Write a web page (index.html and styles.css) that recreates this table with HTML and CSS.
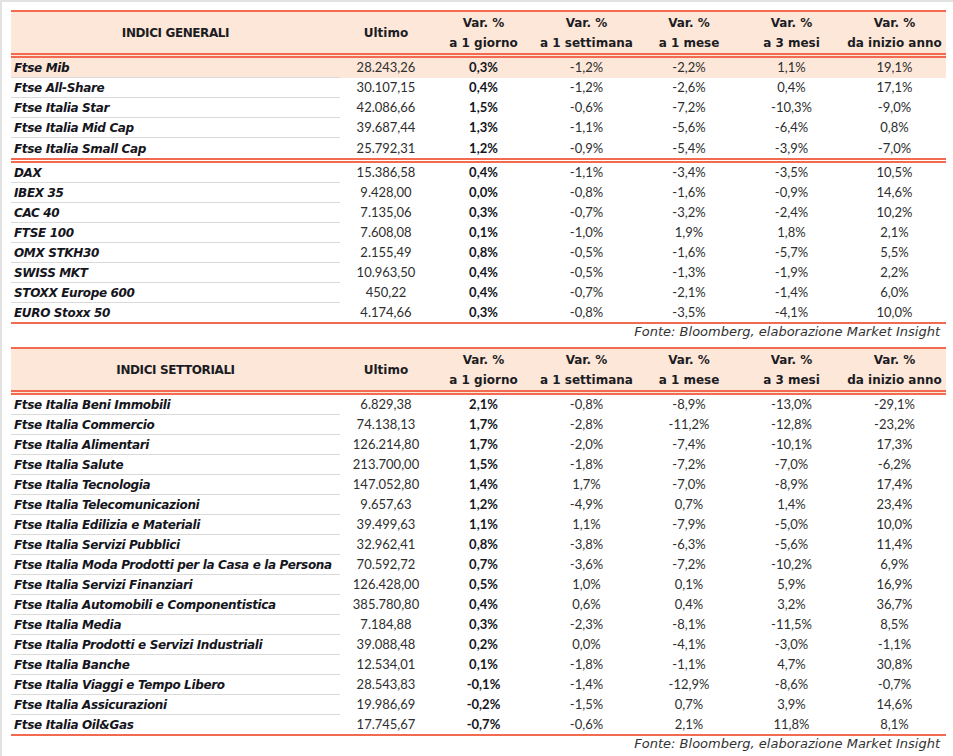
FILE: index.html
```html
<!DOCTYPE html>
<html lang="it">
<head>
<meta charset="utf-8">
<title>Indici</title>
<link rel="stylesheet" href="styles.css">
</head>
<body>
<div class="page">
  <table class="grid">
    <colgroup>
      <col class="c-name"><col class="c-last"><col class="c-v"><col class="c-v"><col class="c-v2"><col class="c-v"><col class="c-v">
    </colgroup>
    <thead>
      <tr>
        <th class="h-name">INDICI GENERALI</th>
        <th>Ultimo</th>
        <th>Var. %<br>a 1 giorno</th>
        <th>Var. %<br>a 1 settimana</th>
        <th>Var. %<br>a 1 mese</th>
        <th>Var. %<br>a 3 mesi</th>
        <th>Var. %<br>da inizio anno</th>
      </tr>
    </thead>
    <tbody>
      <tr class="hl"><td>Ftse Mib</td><td>28.243,26</td><td>0,3%</td><td>-1,2%</td><td>-2,2%</td><td>1,1%</td><td>19,1%</td></tr>
      <tr><td>Ftse All-Share</td><td>30.107,15</td><td>0,4%</td><td>-1,2%</td><td>-2,6%</td><td>0,4%</td><td>17,1%</td></tr>
      <tr><td>Ftse Italia Star</td><td>42.086,66</td><td>1,5%</td><td>-0,6%</td><td>-7,2%</td><td>-10,3%</td><td>-9,0%</td></tr>
      <tr><td>Ftse Italia Mid Cap</td><td>39.687,44</td><td>1,3%</td><td>-1,1%</td><td>-5,6%</td><td>-6,4%</td><td>0,8%</td></tr>
      <tr class="sep"><td>Ftse Italia Small Cap</td><td>25.792,31</td><td>1,2%</td><td>-0,9%</td><td>-5,4%</td><td>-3,9%</td><td>-7,0%</td></tr>
      <tr><td>DAX</td><td>15.386,58</td><td>0,4%</td><td>-1,1%</td><td>-3,4%</td><td>-3,5%</td><td>10,5%</td></tr>
      <tr><td>IBEX 35</td><td>9.428,00</td><td>0,0%</td><td>-0,8%</td><td>-1,6%</td><td>-0,9%</td><td>14,6%</td></tr>
      <tr><td>CAC 40</td><td>7.135,06</td><td>0,3%</td><td>-0,7%</td><td>-3,2%</td><td>-2,4%</td><td>10,2%</td></tr>
      <tr><td>FTSE 100</td><td>7.608,08</td><td>0,1%</td><td>-1,0%</td><td>1,9%</td><td>1,8%</td><td>2,1%</td></tr>
      <tr><td>OMX STKH30</td><td>2.155,49</td><td>0,8%</td><td>-0,5%</td><td>-1,6%</td><td>-5,7%</td><td>5,5%</td></tr>
      <tr><td>SWISS MKT</td><td>10.963,50</td><td>0,4%</td><td>-0,5%</td><td>-1,3%</td><td>-1,9%</td><td>2,2%</td></tr>
      <tr><td>STOXX Europe 600</td><td>450,22</td><td>0,4%</td><td>-0,7%</td><td>-2,1%</td><td>-1,4%</td><td>6,0%</td></tr>
      <tr class="last"><td>EURO Stoxx 50</td><td>4.174,66</td><td>0,3%</td><td>-0,8%</td><td>-3,5%</td><td>-4,1%</td><td>10,0%</td></tr>
    </tbody>
  </table>
  <p class="source">Fonte: Bloomberg, elaborazione Market Insight</p>

  <table class="grid second">
    <colgroup>
      <col class="c-name"><col class="c-last"><col class="c-v"><col class="c-v"><col class="c-v2"><col class="c-v"><col class="c-v">
    </colgroup>
    <thead>
      <tr>
        <th class="h-name">INDICI SETTORIALI</th>
        <th>Ultimo</th>
        <th>Var. %<br>a 1 giorno</th>
        <th>Var. %<br>a 1 settimana</th>
        <th>Var. %<br>a 1 mese</th>
        <th>Var. %<br>a 3 mesi</th>
        <th>Var. %<br>da inizio anno</th>
      </tr>
    </thead>
    <tbody>
      <tr><td>Ftse Italia Beni Immobili</td><td>6.829,38</td><td>2,1%</td><td>-0,8%</td><td>-8,9%</td><td>-13,0%</td><td>-29,1%</td></tr>
      <tr><td>Ftse Italia Commercio</td><td>74.138,13</td><td>1,7%</td><td>-2,8%</td><td>-11,2%</td><td>-12,8%</td><td>-23,2%</td></tr>
      <tr><td>Ftse Italia Alimentari</td><td>126.214,80</td><td>1,7%</td><td>-2,0%</td><td>-7,4%</td><td>-10,1%</td><td>17,3%</td></tr>
      <tr><td>Ftse Italia Salute</td><td>213.700,00</td><td>1,5%</td><td>-1,8%</td><td>-7,2%</td><td>-7,0%</td><td>-6,2%</td></tr>
      <tr><td>Ftse Italia Tecnologia</td><td>147.052,80</td><td>1,4%</td><td>1,7%</td><td>-7,0%</td><td>-8,9%</td><td>17,4%</td></tr>
      <tr><td>Ftse Italia Telecomunicazioni</td><td>9.657,63</td><td>1,2%</td><td>-4,9%</td><td>0,7%</td><td>1,4%</td><td>23,4%</td></tr>
      <tr><td>Ftse Italia Edilizia e Materiali</td><td>39.499,63</td><td>1,1%</td><td>1,1%</td><td>-7,9%</td><td>-5,0%</td><td>10,0%</td></tr>
      <tr><td>Ftse Italia Servizi Pubblici</td><td>32.962,41</td><td>0,8%</td><td>-3,8%</td><td>-6,3%</td><td>-5,6%</td><td>11,4%</td></tr>
      <tr><td>Ftse Italia Moda Prodotti per la Casa e la Persona</td><td>70.592,72</td><td>0,7%</td><td>-3,6%</td><td>-7,2%</td><td>-10,2%</td><td>6,9%</td></tr>
      <tr><td>Ftse Italia Servizi Finanziari</td><td>126.428,00</td><td>0,5%</td><td>1,0%</td><td>0,1%</td><td>5,9%</td><td>16,9%</td></tr>
      <tr><td>Ftse Italia Automobili e Componentistica</td><td>385.780,80</td><td>0,4%</td><td>0,6%</td><td>0,4%</td><td>3,2%</td><td>36,7%</td></tr>
      <tr><td>Ftse Italia Media</td><td>7.184,88</td><td>0,3%</td><td>-2,3%</td><td>-8,1%</td><td>-11,5%</td><td>8,5%</td></tr>
      <tr><td>Ftse Italia Prodotti e Servizi Industriali</td><td>39.088,48</td><td>0,2%</td><td>0,0%</td><td>-4,1%</td><td>-3,0%</td><td>-1,1%</td></tr>
      <tr><td>Ftse Italia Banche</td><td>12.534,01</td><td>0,1%</td><td>-1,8%</td><td>-1,1%</td><td>4,7%</td><td>30,8%</td></tr>
      <tr><td>Ftse Italia Viaggi e Tempo Libero</td><td>28.543,83</td><td>-0,1%</td><td>-1,4%</td><td>-12,9%</td><td>-8,6%</td><td>-0,7%</td></tr>
      <tr><td>Ftse Italia Assicurazioni</td><td>19.986,69</td><td>-0,2%</td><td>-1,5%</td><td>0,7%</td><td>3,9%</td><td>14,6%</td></tr>
      <tr class="last"><td>Ftse Italia Oil&amp;Gas</td><td>17.745,67</td><td>-0,7%</td><td>-0,6%</td><td>2,1%</td><td>11,8%</td><td>8,1%</td></tr>
    </tbody>
  </table>
  <p class="source">Fonte: Bloomberg, elaborazione Market Insight</p>
</div>
</body>
</html>
```

FILE: styles.css
```css
html, body {
  margin: 0;
  padding: 0;
  background: #ffffff;
}

body {
  font-family: "Lato", "Open Sans", sans-serif;
  font-size: 13px;
  color: #2a2a2a;
}

.page {
  border-top: 2px solid #e2e2e2;
  border-left: 2px solid #e2e2e2;
  padding: 8px 0 0 9px;
  box-sizing: border-box;
  width: 953px;
  height: 756px;
  overflow: hidden;
}

.grid {
  width: 935px;
  table-layout: fixed;
  border-collapse: separate;
  border-spacing: 0;
}

.c-name { width: 329px; }
.c-last { width: 92px; }
.c-v { width: 103px; }
.c-v2 { width: 102px; }

.grid th {
  background: #fce7d8;
  border-top: 2px solid #f26a50;
  border-bottom: 5px double #f26a50;
  font-family: "DejaVu Sans", "Lato", sans-serif;
  font-size: 12px;
  font-weight: 700;
  color: #1c1c24;
  text-align: center;
  line-height: 20px;
  height: 40px;
  padding: 1px 0 0 0;
  box-sizing: content-box;
  vertical-align: middle;
  white-space: nowrap;
}

.grid th.h-name {
  letter-spacing: -0.4px;
}

.grid tr {
  height: 20px;
}

.grid td {
  padding: 0;
  line-height: 19px;
  text-align: center;
  white-space: nowrap;
  border-bottom: 1px solid transparent;
  color: #2e2e2e;
}

.grid td:first-child {
  text-align: left;
  padding: 2px 0 0 3px;
  line-height: 17px;
  font-family: "DejaVu Sans", "Lato", sans-serif;
  font-size: 12px;
  letter-spacing: -0.35px;
  font-weight: 700;
  font-style: italic;
  color: #15151c;
  border-bottom-color: #dadada;
}

.grid td:nth-child(3) {
  font-weight: 700;
  color: #15151c;
}

.grid tr.hl td {
  background: #fce7d8;
}

.grid tr.sep td {
  border-bottom: 5px double #f26a50;
  line-height: 20px;
}

.grid tr.sep td:first-child {
  line-height: 18px;
}

.grid tr.last td {
  border-bottom: 2px solid #f26a50;
}

.source {
  margin: 0 0 7px 0;
  width: 935px;
  text-align: right;
  font-family: "DejaVu Sans", "Lato", sans-serif;
  font-size: 13px;
  font-style: italic;
  color: #333333;
  line-height: 16px;
  padding: 0 6px 0 0;
  box-sizing: border-box;
}
```
